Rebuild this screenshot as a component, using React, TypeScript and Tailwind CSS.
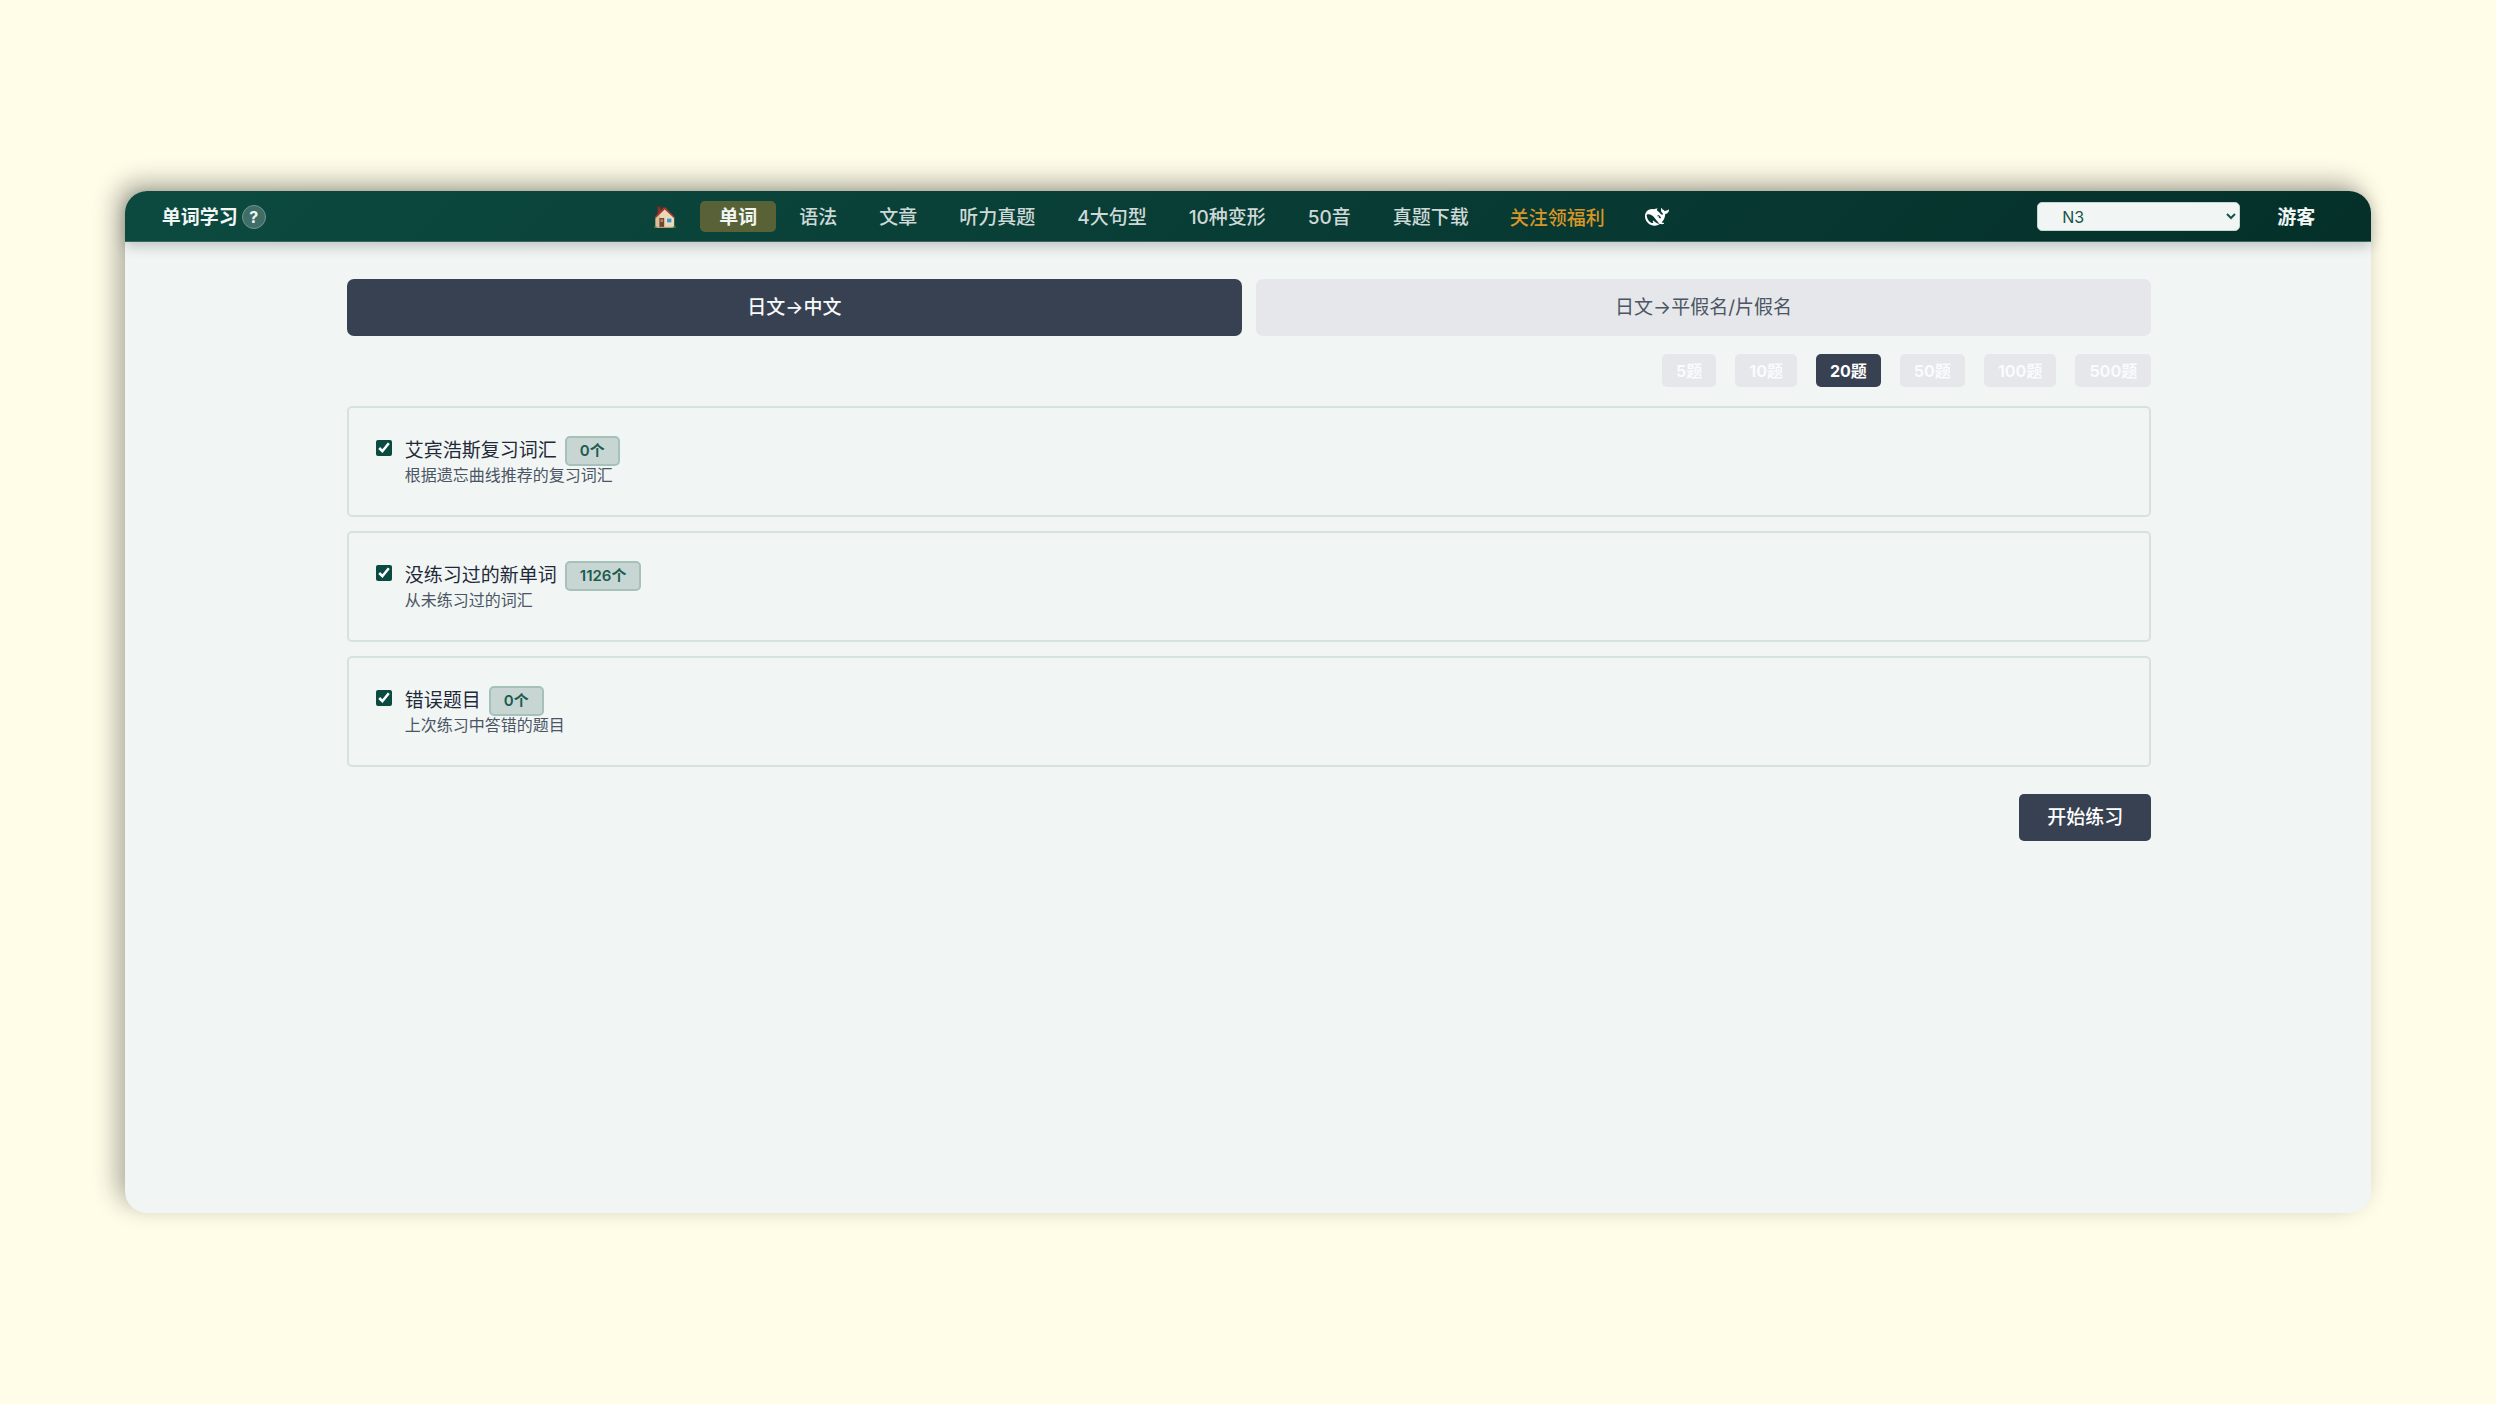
import { useState } from 'react';

const navItems = ['单词', '语法', '文章', '听力真题', '4大句型', '10种变形', '50音', '真题下载'];
const modes = ['日文→中文', '日文→平假名/片假名'];
const counts = [5, 10, 20, 50, 100, 500];
const sources = [
  { id: 'review', title: '艾宾浩斯复习词汇', total: 0, note: '根据遗忘曲线推荐的复习词汇' },
  { id: 'fresh', title: '没练习过的新单词', total: 1126, note: '从未练习过的词汇' },
  { id: 'wrong', title: '错误题目', total: 0, note: '上次练习中答错的题目' },
];

function HouseIcon() {
  return (
    <svg viewBox="0 0 24 24" className="h-6 w-6" aria-hidden="true">
      <path d="M4.6 2h3.2v5.5l-3.2 3z" fill="#8f3029" />
      <path d="M4.2 1.2h4v1.6h-4z" fill="#7a2620" />
      <path d="M2.6 12.4 11.6 3l9.6 9.4v10H2.6z" fill="#ead8b4" />
      <path d="M2.6 12.4 7 8v14.4H2.6z" fill="#d8c197" />
      <path d="M1.4 12.6 10.4 2.4h2.2l9.6 10-1 .8-9.5-8.8-9.4 9z" fill="#a2382f" />
      <path d="M6.4 13h4.8v9.4H6.4z" fill="#75432b" />
      <path d="M7.5 14.2h2.6v2.8H7.5z" fill="#a98669" />
      <path d="M13.2 12.8h6v5.4h-6z" fill="#f6eedb" />
      <path d="M13.9 13.5h4.6v4h-4.6z" fill="#4c92c0" />
      <path d="M.8 22.6c.2-1.8 2.2-2.2 3.2-.6l.4.6zM19.4 22.6c.4-1.8 3.4-2 3.8 0z" fill="#5c8f3c" />
      <path d="M4.4 21.8h15.2v1H4.4z" fill="#b9a88c" />
    </svg>
  );
}

function WhaleIcon() {
  return (
    <svg viewBox="0 0 24 24" className="h-6 w-6" fill="currentColor" aria-hidden="true">
      <path d="M23.748 4.482c-.254-.124-.364.113-.512.234-.051.039-.094.09-.137.136-.372.397-.806.657-1.373.626-.829-.046-1.537.214-2.163.848-.133-.782-.575-1.248-1.247-1.548-.352-.156-.708-.311-.955-.65-.172-.241-.219-.51-.305-.774-.055-.16-.11-.323-.293-.35-.2-.031-.278.136-.356.276-.313.572-.434 1.202-.422 1.84.027 1.436.633 2.58 1.838 3.393.137.093.172.187.129.323-.082.28-.18.552-.266.833-.055.179-.137.217-.329.14a5.526 5.526 0 01-1.736-1.18c-.857-.828-1.631-1.742-2.597-2.458a11.365 11.365 0 00-.689-.471c-.985-.957.13-1.743.388-1.836.27-.098.093-.432-.779-.428-.872.004-1.67.295-2.687.684a3.055 3.055 0 01-.465.137 9.597 9.597 0 00-2.883-.102c-1.885.21-3.39 1.102-4.497 2.623C.082 8.606-.231 10.684.152 12.85c.403 2.284 1.569 4.175 3.36 5.653 1.858 1.533 3.997 2.284 6.438 2.14 1.482-.085 3.133-.284 4.994-1.86.47.234.962.327 1.78.397.63.059 1.236-.03 1.705-.128.735-.156.684-.837.419-.961-2.155-1.004-1.682-.595-2.113-.926 1.096-1.296 2.746-2.642 3.392-7.003.05-.347.007-.565 0-.845-.004-.17.035-.237.23-.256a4.173 4.173 0 001.545-.475c1.396-.763 1.96-2.015 2.093-3.517.02-.23-.004-.467-.247-.588zM11.581 18c-2.089-1.642-3.102-2.183-3.52-2.16-.392.024-.321.471-.235.763.09.288.207.486.371.739.114.167.192.416-.113.603-.673.416-1.842-.14-1.897-.167-1.361-.802-2.5-1.86-3.301-3.307-.774-1.393-1.224-2.887-1.298-4.482-.02-.386.093-.522.477-.592a4.696 4.696 0 011.529-.039c2.132.312 3.946 1.265 5.468 2.774.868.86 1.525 1.887 2.202 2.891.72 1.066 1.494 2.082 2.48 2.914.348.292.625.514.891.677-.802.09-2.14.11-3.054-.614zm1-6.44a.306.306 0 01.415-.287.302.302 0 01.2.288.306.306 0 01-.31.307.303.303 0 01-.304-.308zm3.11 1.596c-.2.081-.399.151-.59.16a1.245 1.245 0 01-.798-.254c-.274-.23-.47-.358-.552-.758a1.73 1.73 0 01.016-.588c.07-.327-.008-.537-.239-.727-.187-.156-.426-.199-.688-.199a.559.559 0 01-.254-.078c-.11-.054-.2-.19-.114-.358.028-.054.16-.186.192-.21.356-.202.767-.136 1.146.016.352.144.618.408 1.001.782.391.451.462.576.685.914.176.265.336.537.445.848.067.195-.019.354-.25.452z" />
    </svg>
  );
}

function Header() {
  return (
    <header className="flex items-center justify-between rounded-t-[22px] border-b border-[#3b655f] bg-linear-135 from-[#0c4a40] to-[#05302a] pt-[10px] pr-9 pb-[9px] pl-[37px] shadow-[0_4px_14px_rgba(0,0,0,0.22)]">
      <div className="flex items-center gap-1">
        <h1 className="pt-0.5 text-[19px] leading-[29px] font-bold text-[#f1f6f5]">单词学习</h1>
        <button
          type="button"
          aria-label="帮助"
          className="flex h-6 w-6 items-center justify-center rounded-full border border-[#75958f] bg-[#3f6e66] text-base leading-none font-bold text-[#f1f6f5]"
        >
          ?
        </button>
      </div>

      <nav className="flex items-center gap-1 text-[19px] leading-[29px] font-medium text-[#ced9d7]">
        <a href="#home" aria-label="首页" className="flex h-[31px] items-center px-[19px]">
          <HouseIcon />
        </a>
        {navItems.map((item, i) => (
          <a
            key={item}
            href={`#${item}`}
            className={
              i === 0
                ? 'rounded-[5px] bg-[#596236] px-[19px] pt-0.5 font-bold text-[#f1f6f5]'
                : 'rounded-[5px] px-[19px] pt-0.5'
            }
          >
            {item}
          </a>
        ))}
        <a href="#benefits" className="px-[18px] pt-1 leading-[27px] text-[#d69628]">
          关注领福利
        </a>
        <a href="#deepseek" aria-label="DeepSeek" className="flex h-[31px] items-center pl-[18px] text-white">
          <WhaleIcon />
        </a>
      </nav>

      <div className="flex items-center gap-[17px]">
        <select
          aria-label="级别"
          defaultValue="N3"
          className="h-[29px] w-[203px] rounded-[5px] border border-[#c5d5d1] bg-[#f1f6f5] px-5 text-base leading-none text-[#165449]"
        >
          <option>N1</option>
          <option>N2</option>
          <option>N3</option>
          <option>N4</option>
          <option>N5</option>
        </select>
        <button type="button" className="px-5 pt-0.5 text-[19px] leading-[29px] font-bold text-[#f1f6f5]">
          游客
        </button>
      </div>
    </header>
  );
}

export default function App() {
  const [mode, setMode] = useState(0);
  const [count, setCount] = useState(20);

  return (
    <div className="flex min-h-screen flex-col bg-[#fffde8] px-[5%] py-[191px] font-['Inter','Noto_Sans_CJK_SC',sans-serif]">
      <div className="flex flex-1 flex-col rounded-[22px] bg-[#f1f6f5] shadow-[-8px_-8px_24px_rgba(0,0,0,0.32)]">
        <Header />
        <main className="flex flex-col pt-[37px] pr-[220px] pb-12 pl-[222px]">
          <div className="grid grid-cols-2 gap-[14px]">
            {modes.map((label, i) => (
              <button
                key={label}
                type="button"
                aria-pressed={mode === i}
                onClick={() => setMode(i)}
                className={
                  mode === i
                    ? 'h-[57px] rounded-[7px] bg-[#374151] pt-0.5 text-[19px] font-medium text-[#f9fafb]'
                    : 'h-[57px] rounded-[7px] bg-[#e5e7eb] pt-0.5 text-[19px] text-[#4b5563]'
                }
              >
                {label}
              </button>
            ))}
          </div>

          <div className="mt-[18px] flex justify-end gap-[19px]">
            {counts.map((n) => (
              <button
                key={n}
                type="button"
                aria-pressed={count === n}
                onClick={() => setCount(n)}
                className={
                  count === n
                    ? 'h-[33px] rounded-[5px] bg-[#374151] px-[14px] text-base font-bold text-white'
                    : 'h-[33px] rounded-[5px] bg-[#e5e7eb] px-[14px] text-base font-bold text-[#fafbfc]'
                }
              >
                {n}题
              </button>
            ))}
          </div>

          <div className="mt-[19px] flex flex-col gap-[14px]">
            {sources.map((s) => (
              <div key={s.id} className="flex gap-[13px] rounded-[5px] border-2 border-[#d5e2de] px-[27px] pt-7 pb-[30px]">
                <input
                  id={s.id}
                  type="checkbox"
                  defaultChecked
                  className="mt-1 h-4 w-4 accent-[#0a4a40]"
                />
                <label htmlFor={s.id} className="flex flex-col">
                  <span className="flex items-center gap-2">
                    <span className="text-[19px] leading-[30px] text-[#1f2937]">{s.title}</span>
                    <span className="rounded-[5px] border-2 border-[#a6c0ba] bg-[#c8d6d3] px-[13px] text-[15px] leading-[26px] font-semibold text-[#1c5c50]">
                      {s.total}个
                    </span>
                  </span>
                  <span className="text-base leading-[19px] text-[#4b5563]">{s.note}</span>
                </label>
              </div>
            ))}
          </div>

          <button
            type="button"
            className="mt-[27px] h-[47px] self-end rounded-[5px] bg-[#374151] px-7 pt-0.5 text-[19px] font-medium text-white"
          >
            开始练习
          </button>
        </main>
      </div>
    </div>
  );
}
